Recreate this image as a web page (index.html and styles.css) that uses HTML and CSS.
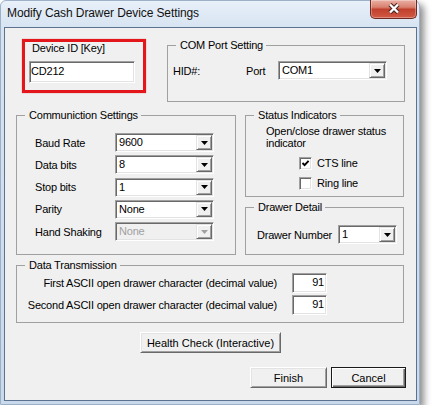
FILE: index.html
```html
<!DOCTYPE html>
<html lang="en">

<head>
    <meta charset="UTF-8">
    <title>Modify Cash Drawer Device Settings</title>
    <link rel="stylesheet" href="styles.css">
</head>

<body>
    <div class="window">
        <div class="titlebar">
            <span class="title">Modify Cash Drawer Device Settings</span>
            <button class="close-btn">
                <svg width="14" height="11" viewBox="0 0 14 11">
                    <path d="M3 1.5 L11 9.5 M11 1.5 L3 9.5" stroke="#4a2420" stroke-width="4.4" />
                    <path d="M3 1.5 L11 9.5 M11 1.5 L3 9.5" stroke="#fff" stroke-width="2.4" />
                </svg>
            </button>
        </div>

        <div class="client">
            <div class="top-row">
                <div class="device-box">
                    <span class="device-label">Device ID [Key]</span>
                    <div class="textbox device-input">CD212</div>
                </div>

                <fieldset class="group com-group">
                    <legend>COM Port Setting</legend>
                    <div class="com-body">
                        <span class="hid-label">HID#:</span>
                        <span class="port-label">Port</span>
                        <div class="combo com-combo">
                            <span class="combo-value">COM1</span>
                            <span class="combo-btn"><svg width="7" height="4" viewBox="0 0 7 4"><path d="M0 0h7L3.5 4z" /></svg></span>
                        </div>
                    </div>
                </fieldset>
            </div>

            <div class="mid-row">
                <fieldset class="group comm-group">
                    <legend>Communiction Settings</legend>
                    <div class="comm-body">
                        <span>Baud Rate</span>
                        <div class="combo">
                            <span class="combo-value">9600</span>
                            <span class="combo-btn"><svg width="7" height="4" viewBox="0 0 7 4"><path d="M0 0h7L3.5 4z" /></svg></span>
                        </div>
                        <span>Data bits</span>
                        <div class="combo">
                            <span class="combo-value">8</span>
                            <span class="combo-btn"><svg width="7" height="4" viewBox="0 0 7 4"><path d="M0 0h7L3.5 4z" /></svg></span>
                        </div>
                        <span>Stop bits</span>
                        <div class="combo">
                            <span class="combo-value">1</span>
                            <span class="combo-btn"><svg width="7" height="4" viewBox="0 0 7 4"><path d="M0 0h7L3.5 4z" /></svg></span>
                        </div>
                        <span>Parity</span>
                        <div class="combo">
                            <span class="combo-value">None</span>
                            <span class="combo-btn"><svg width="7" height="4" viewBox="0 0 7 4"><path d="M0 0h7L3.5 4z" /></svg></span>
                        </div>
                        <span>Hand Shaking</span>
                        <div class="combo combo-disabled">
                            <span class="combo-value">None</span>
                            <span class="combo-btn"><svg width="7" height="4" viewBox="0 0 7 4"><path d="M0 0h7L3.5 4z" /></svg></span>
                        </div>
                    </div>
                </fieldset>

                <div class="side">
                    <fieldset class="group status-group">
                        <legend>Status Indicators</legend>
                        <div class="status-body">
                            <div class="status-text">Open/close drawer status<br>indicator</div>
                            <div class="check-list">
                                <div class="check-row">
                                    <span class="checkbox">
                                        <svg width="9" height="9" viewBox="0 0 9 9"><path d="M1.5 4 L3.6 6.2 L7.6 1.8" fill="none" stroke="#000" stroke-width="1.9" /></svg>
                                    </span>
                                    <span>CTS line</span>
                                </div>
                                <div class="check-row">
                                    <span class="checkbox"></span>
                                    <span>Ring line</span>
                                </div>
                            </div>
                        </div>
                    </fieldset>

                    <fieldset class="group drawer-group">
                        <legend>Drawer Detail</legend>
                        <div class="drawer-body">
                            <span class="drawer-label">Drawer Number</span>
                            <div class="combo drawer-combo">
                                <span class="combo-value">1</span>
                                <span class="combo-btn"><svg width="7" height="4" viewBox="0 0 7 4"><path d="M0 0h7L3.5 4z" /></svg></span>
                            </div>
                        </div>
                    </fieldset>
                </div>
            </div>

            <fieldset class="group data-group">
                <legend>Data Transmission</legend>
                <div class="data-body">
                    <span class="data-label">First ASCII open drawer character (decimal value)</span>
                    <div class="textbox data-input">91</div>
                    <span class="data-label">Second ASCII open drawer character (decimal value)</span>
                    <div class="textbox data-input">91</div>
                </div>
            </fieldset>

            <div class="health-row">
                <button class="btn health-btn">Health Check (Interactive)</button>
            </div>

            <div class="footer">
                <button class="btn finish-btn">Finish</button>
                <button class="btn btn-default cancel-btn">Cancel</button>
            </div>
        </div>
    </div>
</body>

</html>
```

FILE: styles.css
```css
body {
    margin: 0;
    background: #fff;
    font-family: "Liberation Sans", Arial, sans-serif;
    font-size: 11px;
    letter-spacing: -0.2px;
    color: #000;
}

.window {
    width: 420px;
    height: 405px;
    box-sizing: border-box;
    border: 1px solid #9db0c8;
    border-radius: 6px 6px 0 0;
    background: linear-gradient(#e8f0f9, #d6e3f1 28px, #c9d9ec);
    box-shadow: 4px 4px 7px rgba(0, 0, 0, 0.45);
    display: flex;
    flex-direction: column;
}

.titlebar {
    height: 26px;
    display: flex;
    justify-content: space-between;
    align-items: flex-start;
    padding: 0 2px 0 6px;
}

.title {
    font-size: 12px;
    line-height: 12px;
    letter-spacing: -0.1px;
    margin-top: 6px;
    color: #111;
}

.close-btn {
    width: 47px;
    height: 19px;
    margin-top: -1px;
    padding: 0;
    border: 1px solid #6e2a22;
    border-top: none;
    border-radius: 0 0 5px 5px;
    background: linear-gradient(#eab0a4, #d9806f 40%, #c0402c 52%, #d25a44 100%);
    box-shadow: inset 0 0 0 1px rgba(255, 255, 255, 0.3);
    display: flex;
    align-items: center;
    justify-content: center;
}

.close-btn svg {
    margin-top: -2px;
}

.client {
    height: 374px;
    margin: 0 2px 0 3px;
    box-sizing: border-box;
    border: 1px solid #5d7290;
    background: #f0f0f0;
    padding: 11px 0 0 11px;
}

/* sunken and raised edges */
.textbox,
.combo,
.checkbox {
    box-sizing: border-box;
    background: #fff;
    border: 1px solid;
    border-color: #a0a0a0 #fff #fff #a0a0a0;
    box-shadow: inset 1px 1px 0 #696969, inset -1px -1px 0 #e3e3e3;
}

.btn {
    box-sizing: border-box;
    height: 21px;
    padding: 0;
    font: inherit;
    color: #000;
    background: #f0f0f0;
    border: 1px solid;
    border-color: #fff #696969 #696969 #fff;
    box-shadow: inset 1px 1px 0 #e3e3e3, inset -1px -1px 0 #a0a0a0;
}

.btn-default {
    border-color: #1a1a1a;
    box-shadow: inset 1px 1px 0 #fff, inset -1px -1px 0 #696969, inset -2px -2px 0 #a0a0a0;
}

.group {
    box-sizing: border-box;
    margin: 0;
    padding: 0;
    min-width: 0;
    border: 1px solid #a0a0a0;
}

.group legend {
    margin-left: 8px;
    padding: 0 3px 0 4px;
    line-height: 12px;
}

/* combo boxes */
.combo {
    height: 19px;
    padding: 1px;
    display: flex;
}

.combo-value {
    flex: 1;
    padding-left: 2px;
    line-height: 15px;
}

.combo-btn {
    width: 16px;
    box-sizing: border-box;
    background: #f0f0f0;
    border: 1px solid;
    border-color: #e3e3e3 #696969 #696969 #e3e3e3;
    box-shadow: inset 1px 1px 0 #fff, inset -1px -1px 0 #a0a0a0;
    display: flex;
    align-items: center;
    justify-content: center;
}

.combo-btn svg {
    fill: #000;
}

.combo-disabled {
    background: #f0f0f0;
}

.combo-disabled .combo-value {
    color: #a0a0a0;
}

.combo-disabled .combo-btn svg {
    fill: #a0a0a0;
}

/* top row */
.top-row {
    display: flex;
    align-items: flex-start;
}

.device-box {
    margin-left: 6px;
    width: 124px;
    height: 54px;
    box-sizing: border-box;
    border: 3px solid #e3161c;
    box-shadow: 0 0 1px rgba(227, 22, 28, 0.6);
    padding-left: 4px;
}

.device-label {
    display: block;
    line-height: 13px;
    padding-left: 3px;
}

.device-input {
    margin-top: 6px;
    width: 106px;
    height: 22px;
    padding-left: 1px;
    line-height: 18px;
}

.com-group {
    margin-left: 21px;
    width: 238px;
    height: 63px;
}

.com-body {
    display: flex;
    align-items: center;
    padding: 10px 0 0 5px;
}

.hid-label {
    width: 73px;
}

.port-label {
    width: 32px;
}

.com-combo {
    width: 109px;
}

/* middle row */
.mid-row {
    display: flex;
    align-items: flex-start;
    margin-top: 7px;
}

.comm-group {
    width: 220px;
    height: 146px;
}

.comm-body {
    display: grid;
    grid-template-columns: 80px 99px;
    row-gap: 3.25px;
    align-items: center;
    padding: 12px 0 0 18px;
}

.side {
    margin-left: 9px;
    width: 159px;
    display: flex;
    flex-direction: column;
    gap: 4px;
}

.status-group {
    height: 88px;
}

.status-body {
    padding: 4px 0 0 20px;
}

.status-text {
    line-height: 12px;
}

.check-list {
    margin: 7px 0 0 33px;
    display: flex;
    flex-direction: column;
    gap: 6px;
}

.check-row {
    height: 14px;
    display: flex;
    align-items: center;
    gap: 5px;
}

.checkbox {
    width: 13px;
    height: 13px;
    display: flex;
    align-items: center;
    justify-content: center;
}

.drawer-group {
    height: 54px;
}

.drawer-body {
    display: flex;
    align-items: center;
    padding: 12px 0 0 11px;
}

.drawer-label {
    width: 81px;
}

.drawer-combo {
    width: 59px;
}

/* data transmission */
.data-group {
    margin-top: 4px;
    width: 388px;
    height: 64px;
}

.data-body {
    display: grid;
    grid-template-columns: 260px 35px;
    column-gap: 15px;
    row-gap: 2px;
    align-items: center;
    padding-top: 2px;
}

.data-label {
    text-align: right;
}

.data-input {
    height: 20px;
    line-height: 16px;
    text-align: right;
    padding-right: 2px;
}

/* buttons */
.health-row {
    margin-top: 9px;
}

.health-btn {
    margin-left: 124px;
    width: 141px;
}

.footer {
    margin-top: 14px;
    width: 390px;
    display: flex;
    justify-content: flex-end;
    gap: 4px;
}

.finish-btn {
    width: 77px;
}

.cancel-btn {
    width: 75px;
}
```
